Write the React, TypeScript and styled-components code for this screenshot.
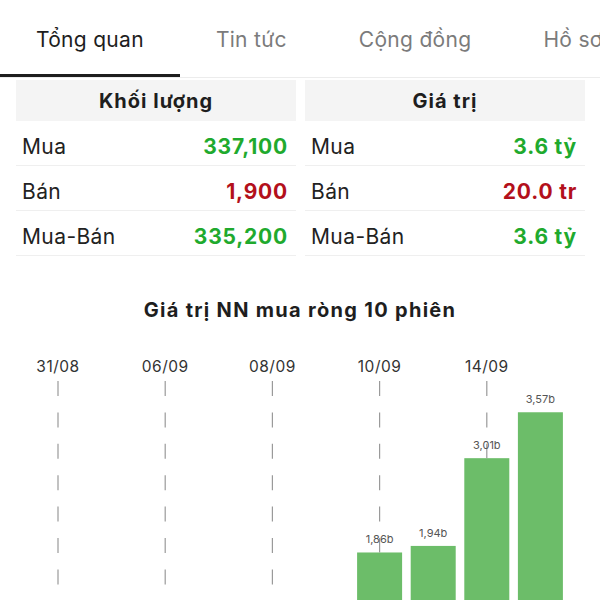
import React from "react";
import styled, { createGlobalStyle } from "styled-components";

const GlobalStyle = createGlobalStyle`
  html, body {
    margin: 0;
    padding: 0;
    background: #ffffff;
    overflow: hidden;
  }
  body {
    font-family: Inter, "Noto Sans", "Liberation Sans", sans-serif;
    color: #222;
  }
`;

type Tab = { label: string; active?: boolean };

const tabs: Tab[] = [
    { label: "Tổng quan", active: true },
    { label: "Tin tức" },
    { label: "Cộng đồng" },
    { label: "Hồ sơ" },
];

type Row = { label: string; value: string; tone: "up" | "down" };

const volumeRows: Row[] = [
    { label: "Mua", value: "337,100", tone: "up" },
    { label: "Bán", value: "1,900", tone: "down" },
    { label: "Mua-Bán", value: "335,200", tone: "up" },
];

const valueRows: Row[] = [
    { label: "Mua", value: "3.6 tỷ", tone: "up" },
    { label: "Bán", value: "20.0 tr", tone: "down" },
    { label: "Mua-Bán", value: "3.6 tỷ", tone: "up" },
];

type Session = { date?: string; value?: number; text?: string };

const sessions: Session[] = [
    { date: "31/08" },
    {},
    { date: "06/09" },
    {},
    { date: "08/09" },
    {},
    { date: "10/09", value: 1.86, text: "1,86b" },
    { value: 1.94, text: "1,94b" },
    { date: "14/09", value: 3.01, text: "3,01b" },
    { value: 3.57, text: "3,57b" },
];

const CHART_H = 262;
const BASE_Y = 366;
const PX_PER_B = 82;
const STEP = 53.6;
const FIRST_X = 58;
const BAR_W = 45;

const PriceChart = () => (
    <ChartSvg width={600} height={CHART_H} viewBox={`0 0 600 ${CHART_H}`}>
        {sessions.map((s, i) => {
            const cx = FIRST_X + STEP * i;
            const top = s.value ? BASE_Y - s.value * PX_PER_B : CHART_H + 20;
            return (
                <g key={i}>
                    {s.value && (
                        <rect x={cx - BAR_W / 2} y={top} width={BAR_W} height={BASE_Y - top} fill="#6cbd69" />
                    )}
                    {s.date && (
                        <>
                            <text x={cx} y={33} textAnchor="middle" fontSize={15.5} letterSpacing={0.5} fill="#333">
                                {s.date}
                            </text>
                            <line x1={cx} y1={42} x2={cx} y2={top} stroke="#9a9a9a" strokeWidth={1.2} strokeDasharray="15 16.4" />
                        </>
                    )}
                    {s.text && (
                        <text x={cx} y={top - 9} textAnchor="middle" fontSize={11} fill="#555">
                            {s.text}
                        </text>
                    )}
                </g>
            );
        })}
    </ChartSvg>
);

const StatTable = ({ title, rows }: { title: string; rows: Row[] }) => (
    <Table>
        <HeaderCell>{title}</HeaderCell>
        {rows.map(r => (
            <StatRow key={r.label}>
                <RowLabel>{r.label}</RowLabel>
                <RowValue tone={r.tone}>{r.value}</RowValue>
            </StatRow>
        ))}
    </Table>
);

export default function App() {
    return (
        <Page>
            <GlobalStyle />
            <TabBar>
                {tabs.map(t => (
                    <TabItem key={t.label} active={t.active}>{t.label}</TabItem>
                ))}
            </TabBar>
            <Tables>
                <StatTable title="Khối lượng" rows={volumeRows} />
                <StatTable title="Giá trị" rows={valueRows} />
            </Tables>
            <ChartSection>
                <ChartTitle>Giá trị NN mua ròng 10 phiên</ChartTitle>
                <PriceChart />
            </ChartSection>
        </Page>
    );
}

const Page = styled.div`
  width: 600px;
  height: 600px;
  overflow: hidden;
  background: #fff;
`;

const TabBar = styled.div`
  display: flex;
  height: 78px;
  border-bottom: 1px solid #ececec;
  box-sizing: border-box;
  white-space: nowrap;
  overflow: hidden;
`;

const TabItem = styled.div<{ active?: boolean }>`
  flex: none;
  display: flex;
  align-items: center;
  padding: 4px 36px 0;
  font-size: 21px;
  letter-spacing: 0.3px;
  color: ${p => (p.active ? "#1e1e1e" : "#7b7b7b")};
  border-bottom: 3px solid ${p => (p.active ? "#1e1e1e" : "transparent")};
`;

const Tables = styled.div`
  display: grid;
  grid-template-columns: 280px 280px;
  column-gap: 9px;
  padding: 2px 0 0 16px;
`;

const Table = styled.div`
  display: flex;
  flex-direction: column;
`;

const HeaderCell = styled.div`
  height: 41px;
  display: flex;
  align-items: center;
  justify-content: center;
  background: #f4f4f4;
  font-size: 20px;
  font-weight: 700;
  letter-spacing: 1px;
  color: #1e1e1e;
`;

const StatRow = styled.div`
  height: 45px;
  display: flex;
  align-items: center;
  justify-content: space-between;
  padding: 6px 8px 0 6px;
  border-bottom: 1px solid #efefef;
  box-sizing: border-box;
`;

const RowLabel = styled.span`
  font-size: 21px;
  letter-spacing: 0.4px;
  color: #222;
`;

const RowValue = styled.span<{ tone: "up" | "down" }>`
  font-size: 21px;
  font-weight: 700;
  letter-spacing: 0.8px;
  color: ${p => (p.tone === "up" ? "#1faa2e" : "#b3101b")};
`;

const ChartSection = styled.div`
  display: flex;
  flex-direction: column;
  align-items: center;
  padding-top: 42px;
`;

const ChartTitle = styled.div`
  font-size: 20px;
  font-weight: 700;
  line-height: 24px;
  letter-spacing: 1.3px;
  color: #1e1e1e;
  margin-bottom: 17px;
`;

const ChartSvg = styled.svg`
  display: block;
  font-family: Inter, "Liberation Sans", sans-serif;
`;
